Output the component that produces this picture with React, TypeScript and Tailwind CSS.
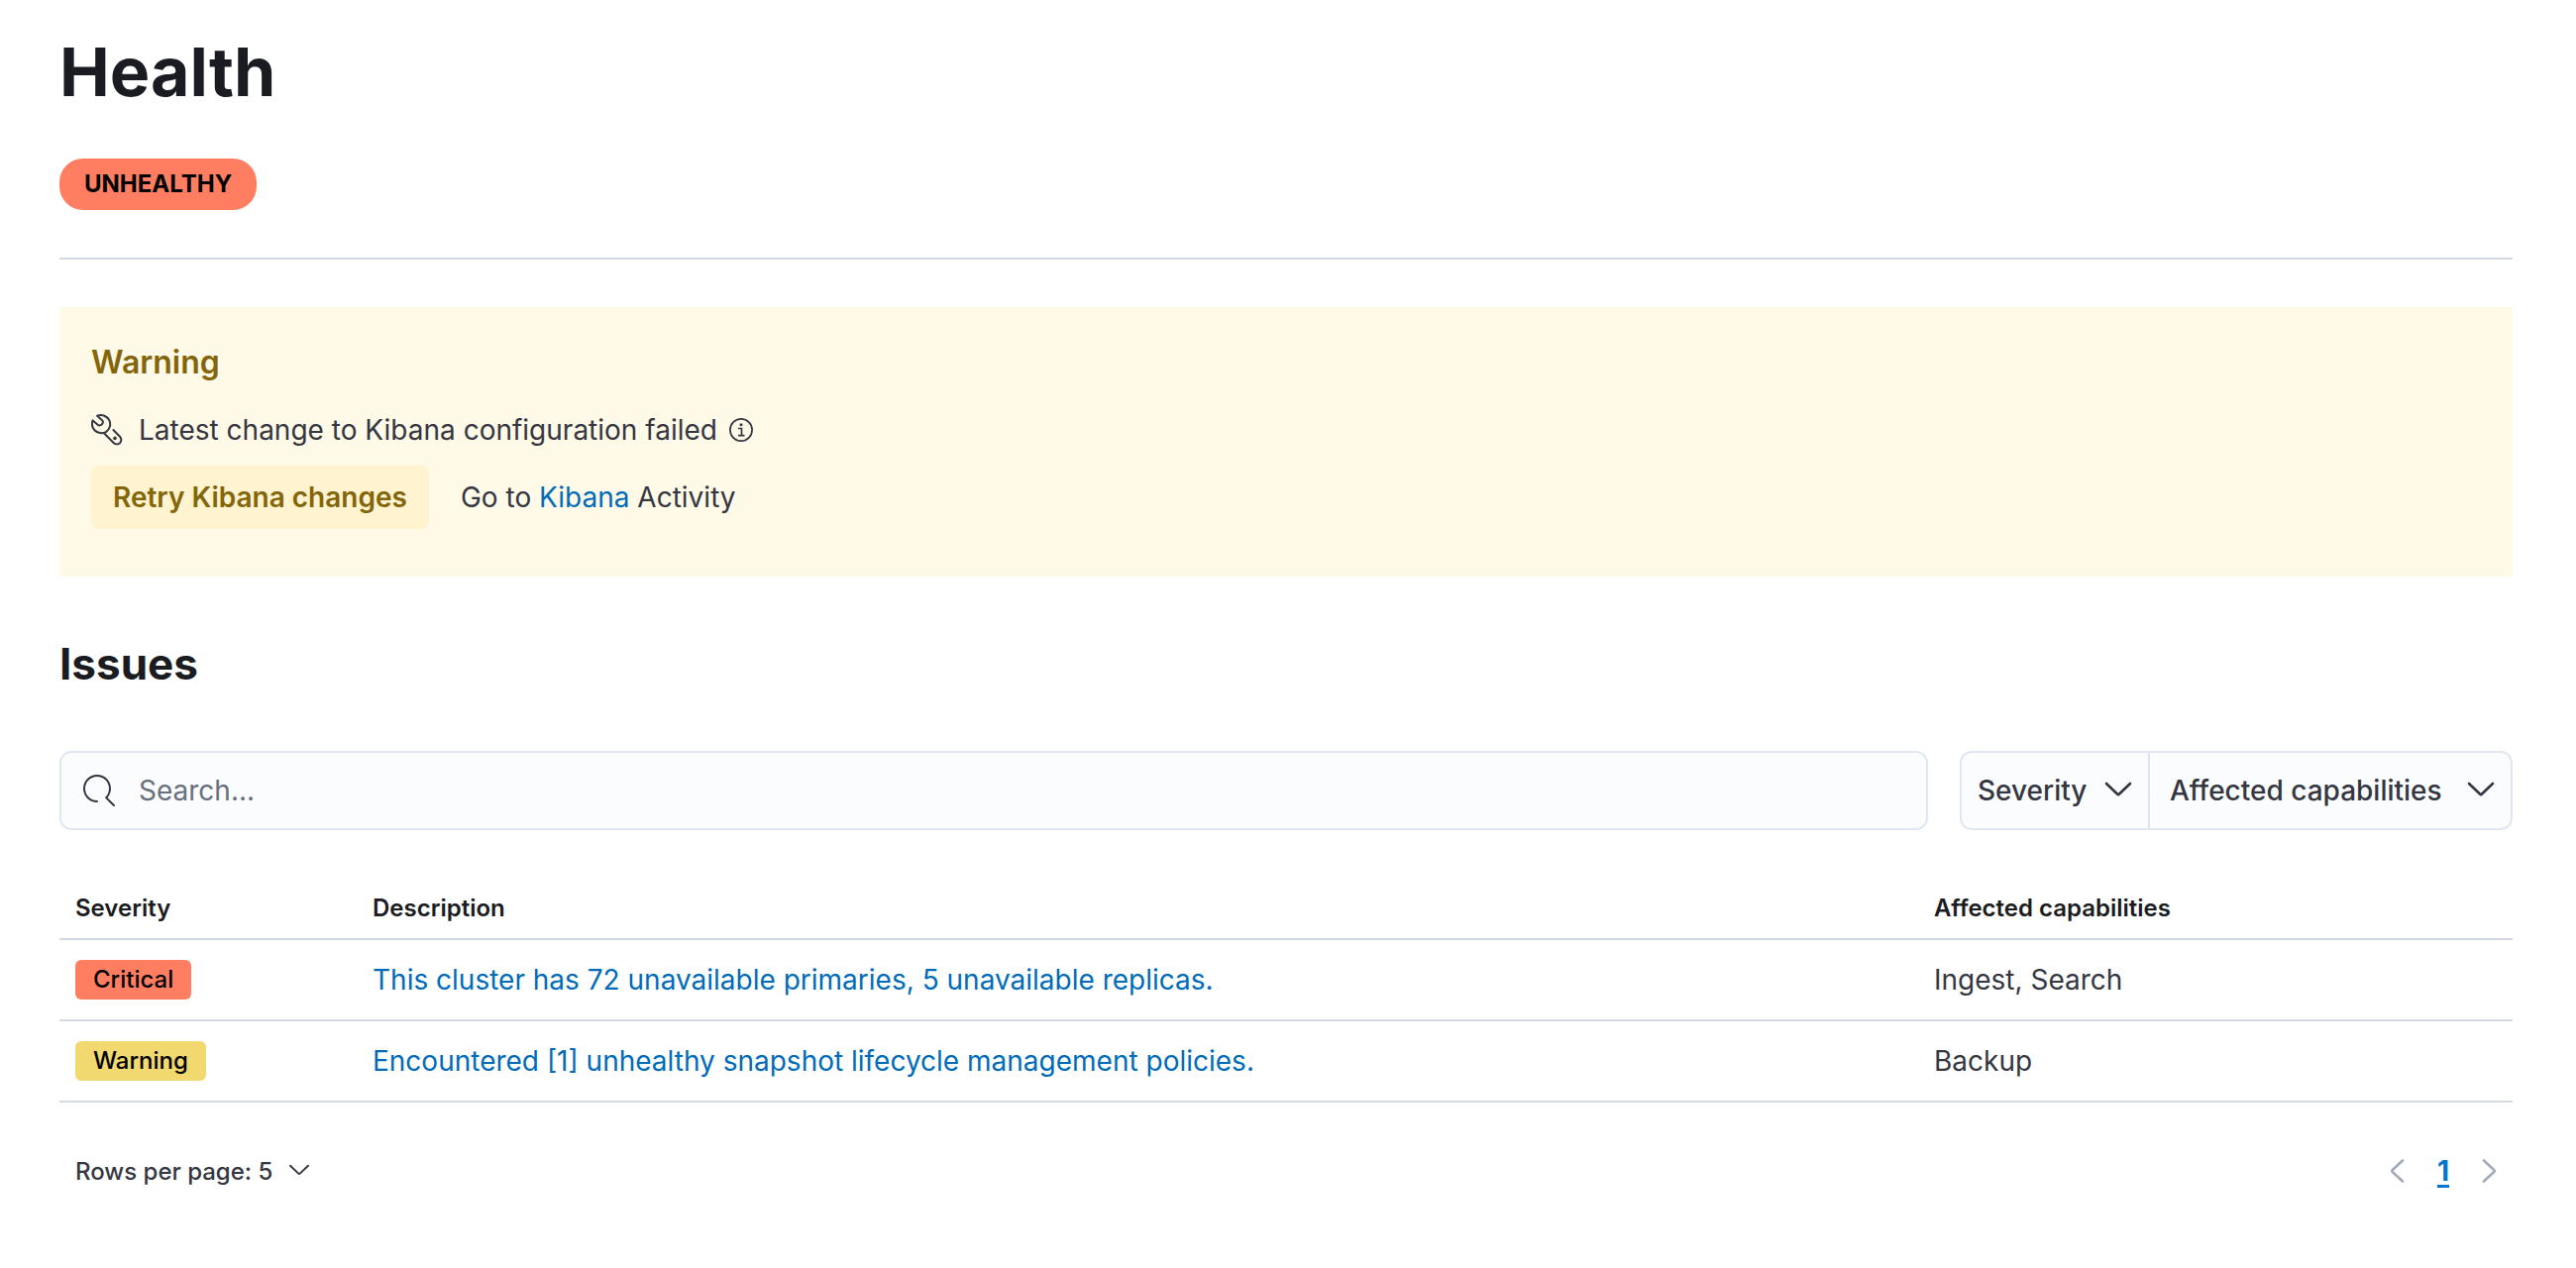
import React, { useState } from "react";

type Tone = "critical" | "warning";

interface Issue {
	severity: string;
	tone: Tone;
	description: string;
	capabilities: string;
}

const issues: Issue[] = [
	{
		severity: "Critical",
		tone: "critical",
		description: "This cluster has 72 unavailable primaries, 5 unavailable replicas.",
		capabilities: "Ingest, Search",
	},
	{
		severity: "Warning",
		tone: "warning",
		description: "Encountered [1] unhealthy snapshot lifecycle management policies.",
		capabilities: "Backup",
	},
];

const badgeTone: Record<Tone, string> = {
	critical: "bg-[#ff7e62]",
	warning: "bg-[#f1d86f]",
};

const WrenchIcon = () => (
	<svg
		viewBox="0 0 16 16"
		className="size-8 shrink-0"
		fill="none"
		stroke="currentColor"
		strokeLinecap="round"
		strokeLinejoin="round"
		aria-hidden="true"
	>
		<path d="M3 .9C5.5-.1 8.2 1 9.2 3.200c.9 2.100.2 4.500-1.600 5.700-1.900 1.200-4.500.8-6-.9C.4 6.600.2 4.800.8 3.200l2.400 2.100c.8.6 1.800.5 2.300-.2.6-.7.5-1.600-.2-2.200Z" />
		<path d="m6.500 9.600 4.800 4.900c.9.900 2.300.9 3.200.1.9-.9.9-2.300 0-3.200L11.200 8" />
		<circle cx="12" cy="12.200" r=".9" fill="currentColor" stroke="none" />
	</svg>
);

const InfoIcon = () => (
	<svg viewBox="0 0 24 24" className="size-6" fill="none" stroke="currentColor" strokeWidth="1.7" aria-hidden="true">
		<circle cx="12" cy="12" r="11.100" />
		<path d="M9 10.500h3.500v7M9 17.700h6.500" />
		<circle cx="12" cy="6.700" r="1.500" fill="currentColor" stroke="none" />
	</svg>
);

const SearchIcon = () => (
	<svg viewBox="0 0 16 16" className="size-8 shrink-0" fill="currentColor" aria-hidden="true">
		<path d="M11.271 11.978l3.872 3.873a.502.502 0 00.708 0 .502.502 0 000-.708l-3.565-3.564c2.38-2.747 2.267-6.923-.342-9.532-2.73-2.73-7.17-2.73-9.898 0-2.728 2.729-2.728 7.17 0 9.9a6.955 6.955 0 004.949 2.05.5.5 0 000-1 5.96 5.96 0 01-4.242-1.757 6.01 6.01 0 010-8.486 6.004 6.004 0 018.484 0 6.01 6.01 0 010 8.486.5.5 0 000 .738z" />
	</svg>
);

interface ChevronProps {
	className: string;
	d: string;
	viewBox?: string;
}

const Chevron: React.FC<ChevronProps> = ({ className, d, viewBox = "0 0 32 32" }) => (
	<svg
		viewBox={viewBox}
		className={className}
		fill="none"
		stroke="currentColor"
		strokeWidth="2.6"
		strokeLinecap="round"
		strokeLinejoin="round"
		aria-hidden="true"
	>
		<path d={d} />
	</svg>
);

const DOWN = "m4 9 11 10.500q1 1 2 0L28 9";
const LEFT = "M17 1.500 6.800 11q-1 1 0 2L17 22.500";
const RIGHT = "M7 1.500 17.200 11q1 1 0 2L7 22.500";

interface FilterProps {
	label: string;
	className: string;
	options: string[];
}

const Filter: React.FC<FilterProps> = ({ label, className, options }) => (
	<div className={`relative ${className}`}>
		<select
			aria-label={label}
			defaultValue=""
			className="size-full appearance-none bg-transparent font-medium text-[#343741] outline-none"
		>
			<option value="">{label}</option>
			{options.map((option) => (
				<option key={option}>{option}</option>
			))}
		</select>
		<Chevron
			d={DOWN}
			className="pointer-events-none absolute right-[14px] top-1/2 size-8 -translate-y-1/2 text-[#343741]"
		/>
	</div>
);

const App: React.FC = () => {
	const [query, setQuery] = useState("");
	const [pageSize, setPageSize] = useState("5");

	const visible = issues.filter((issue) =>
		issue.description.toLowerCase().includes(query.toLowerCase()),
	);

	return (
		<main className="min-h-screen bg-white pb-12 pl-[60px] pr-16 pt-8 font-['Inter',sans-serif] text-[28px] leading-10 text-[#343741]">
			<h1 className="text-[68px] font-bold leading-20 text-[#1a1c21]">Health</h1>

			<div className="mt-12 flex">
				<span className="rounded-3xl bg-[#ff7e62] px-[25px] text-2xl font-bold leading-[52px] text-black">
					UNHEALTHY
				</span>
			</div>

			<hr className="mt-12 border-t-2 border-[#d3dae6]" />

			<section className="mt-12 bg-[#fff9e8] px-8 pb-12 pt-8">
				<h2 className="text-[32px] font-semibold leading-12 text-[#83650a]">Warning</h2>
				<div className="mt-6 flex items-center">
					<WrenchIcon />
					<p className="ml-4">Latest change to Kibana configuration failed</p>
					<button type="button" aria-label="More information" className="ml-3">
						<InfoIcon />
					</button>
				</div>
				<div className="mt-4 flex items-center gap-8">
					<button
						type="button"
						className="h-16 rounded-lg bg-[#fff3d0] px-[22px] font-semibold text-[#83650a]"
					>
						Retry Kibana changes
					</button>
					<p>
						Go to{" "}
						<a href="#kibana" className="text-[#006bb8]">
							Kibana
						</a>{" "}
						Activity
					</p>
				</div>
			</section>

			<h2 className="mt-16 text-[44px] font-bold leading-12 text-[#1a1c21]">Issues</h2>

			<div className="mt-16 flex gap-8">
				<label className="flex h-20 flex-1 items-center gap-6 rounded-xl border-2 border-[#e1e6f1] bg-[#fbfcfd] px-[22px]">
					<SearchIcon />
					<input
						type="search"
						aria-label="Search issues"
						placeholder="Search..."
						value={query}
						onChange={(e) => setQuery(e.target.value)}
						className="min-w-0 flex-1 bg-transparent outline-none placeholder:text-[#69707d]"
					/>
				</label>
				<div className="flex h-20 rounded-xl border-2 border-[#e1e6f1] bg-[#fbfcfd]">
					<Filter
						label="Severity"
						className="w-[188px] pl-4"
						options={["Critical", "Warning"]}
					/>
					<Filter
						label="Affected capabilities"
						className="w-[366px] border-l-2 border-[#dfe3f1] pl-5"
						options={["Ingest", "Search", "Backup"]}
					/>
				</div>
			</div>

			<table className="mt-12 w-full table-fixed text-left">
				<thead>
					<tr className="h-[62px] border-b-2 border-[#d3dae6] text-2xl text-[#1a1c21]">
						<th className="w-[300px] px-4 font-semibold">Severity</th>
						<th className="px-4 font-semibold">Description</th>
						<th className="w-[600px] px-4 font-semibold">Affected capabilities</th>
					</tr>
				</thead>
				<tbody>
					{visible.map((issue) => (
						<tr key={issue.description} className="h-[82px] border-b-2 border-[#d3dae6]">
							<td className="px-4">
								<span
									className={`block w-fit rounded-md px-[18px] text-2xl font-medium leading-10 text-black ${badgeTone[issue.tone]}`}
								>
									{issue.severity}
								</span>
							</td>
							<td className="px-4">
								<a href="#issue" className="text-[#006bb8]">
									{issue.description}
								</a>
							</td>
							<td className="px-4">{issue.capabilities}</td>
						</tr>
					))}
				</tbody>
			</table>

			<div className="mt-12 flex items-center justify-between pl-4 pr-3">
				<div className="relative">
					<select
						aria-label="Rows per page"
						value={pageSize}
						onChange={(e) => setPageSize(e.target.value)}
						className="appearance-none bg-transparent pr-11 text-2xl font-medium leading-10 text-[#343741] outline-none"
					>
						<option value="5">Rows per page: 5</option>
					</select>
					<Chevron
						d={DOWN}
						className="pointer-events-none absolute right-1.5 top-1/2 size-6 -translate-y-1/2 text-[#343741]"
					/>
				</div>
				<nav aria-label="Pagination" className="flex items-center gap-7">
					<button type="button" aria-label="Previous page" disabled className="text-[#a2abba]">
						<Chevron d={LEFT} viewBox="0 0 24 24" className="size-6" />
					</button>
					<a
						href="#page-1"
						aria-current="page"
						className="font-bold text-[#0077cc] underline decoration-3 underline-offset-4"
					>
						1
					</a>
					<button type="button" aria-label="Next page" disabled className="text-[#a2abba]">
						<Chevron d={RIGHT} viewBox="0 0 24 24" className="size-6" />
					</button>
				</nav>
			</div>
		</main>
	);
};

export default App;
